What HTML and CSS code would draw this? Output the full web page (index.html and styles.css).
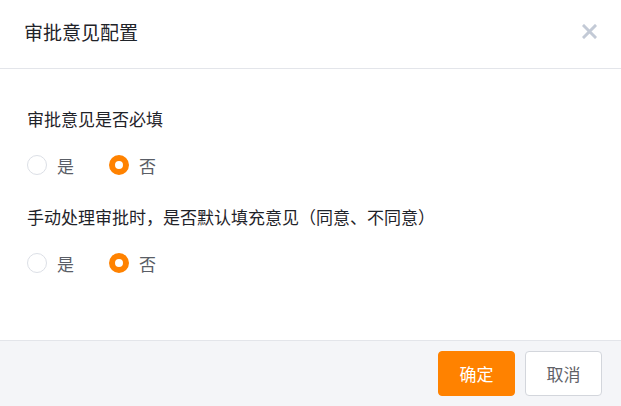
FILE: index.html
```html
<!DOCTYPE html>
<html lang="zh-CN">
<head>
    <meta charset="UTF-8">
    <meta name="viewport" content="width=device-width, initial-scale=1.0">
    <title>审批意见配置</title>
    <link rel="stylesheet" href="styles.css">
</head>
<body>
<div class="dialog">
    <div class="dialog-header">
        <span class="dialog-title">审批意见配置</span>
        <span class="dialog-close">
            <svg width="15" height="15" viewBox="0 0 15 15">
                <path d="M2 2 L13 13 M13 2 L2 13" stroke="#c3cad6" stroke-width="3" stroke-linecap="square"/>
            </svg>
        </span>
    </div>

    <div class="dialog-body">
        <div class="field">
            <div class="field-label">审批意见是否必填</div>
            <div class="radio-group">
                <label class="radio"><span class="radio-dot"></span><span class="radio-text">是</span></label>
                <label class="radio checked"><span class="radio-dot"></span><span class="radio-text">否</span></label>
            </div>
        </div>
        <div class="field">
            <div class="field-label">手动处理审批时，是否默认填充意见（同意、不同意）</div>
            <div class="radio-group">
                <label class="radio"><span class="radio-dot"></span><span class="radio-text">是</span></label>
                <label class="radio checked"><span class="radio-dot"></span><span class="radio-text">否</span></label>
            </div>
        </div>
    </div>

    <div class="dialog-footer">
        <button class="btn btn-primary">确定</button>
        <button class="btn">取消</button>
    </div>
</div>
</body>
</html>
```

FILE: styles.css
```css
html, body {
  margin: 0;
  padding: 0;
  background: #fff;
}
body {
  font-family: "Noto Sans CJK SC", "Liberation Sans", sans-serif;
}
.dialog {
  width: 621px;
  height: 406px;
  display: flex;
  flex-direction: column;
}
.dialog-header {
  height: 68px;
  border-bottom: 1px solid #e3e5ea;
  display: flex;
  align-items: center;
  justify-content: space-between;
  padding: 0 24px 0 24px;
}
.dialog-title {
  font-size: 19px;
  color: #1f2329;
  line-height: 24px;
  margin-top: -4px;
}
.dialog-close {
  display: flex;
  margin-top: -6px;
}
.dialog-body {
  flex: 1;
  padding: 38px 27px 0 27px;
}
.field {
  margin-bottom: 28px;
}
.field-label {
  font-size: 17px;
  line-height: 24px;
  color: #1f2329;
  margin-bottom: 22px;
}
.radio-group {
  display: flex;
  gap: 35px;
}
.radio {
  display: flex;
  align-items: center;
  height: 24px;
}
.radio-dot {
  width: 18px;
  height: 18px;
  border: 1px solid #dcdfe6;
  border-radius: 50%;
  margin-right: 10px;
  box-sizing: content-box;
}
.radio.checked .radio-dot {
  width: 8px;
  height: 8px;
  border: 6px solid #ff8200;
}
.radio-text {
  font-size: 17px;
  color: #5a5e66;
}
.dialog-footer {
  height: 66px;
  border-top: 1px solid #e3e5ea;
  background: #f4f5f8;
  display: flex;
  justify-content: flex-end;
  align-items: flex-start;
  gap: 10px;
  padding: 10px 19px 0 0;
  box-sizing: border-box;
}
.btn {
  width: 77px;
  height: 45px;
  border: 1px solid #d3d6dc;
  border-radius: 4px;
  background: #fff;
  color: #5f6268;
  font-family: "Noto Sans CJK SC", "Liberation Sans", sans-serif;
  font-size: 17px;
  padding: 0;
}
.btn-primary {
  background: #ff8200;
  border-color: #ff8200;
  color: #fff;
}
```
